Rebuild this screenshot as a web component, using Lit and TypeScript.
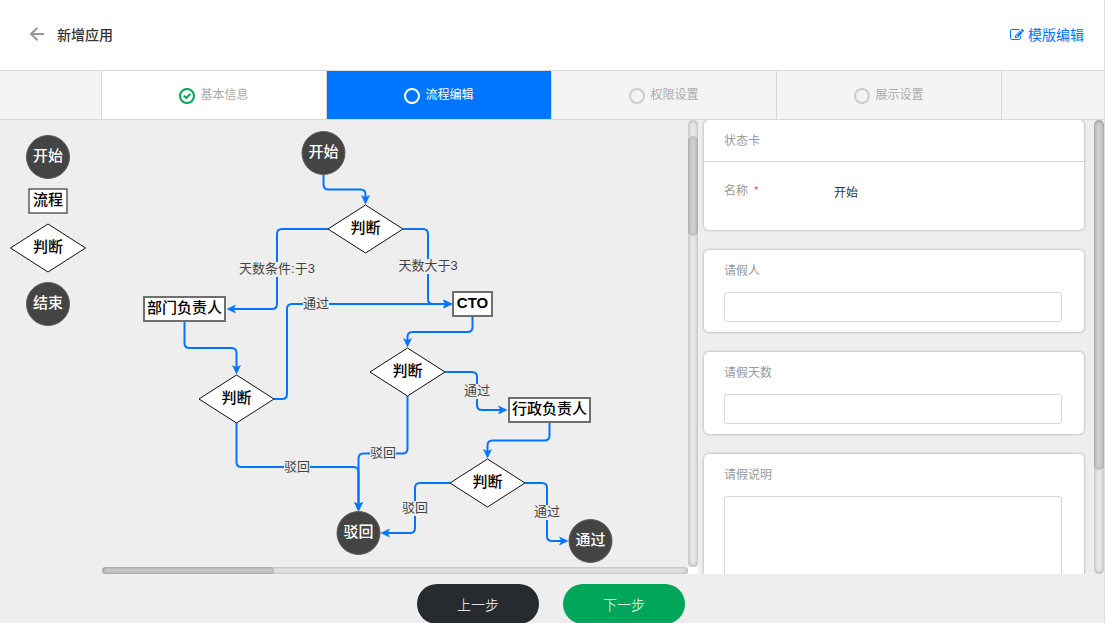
import { LitElement, html, svg, css, nothing } from "lit";
import { customElement, property } from "lit/decorators.js";

type Point = [number, number];

interface FlowNode {
  kind: "circle" | "box" | "diamond";
  x: number;
  y: number;
  w?: number;
  text: string;
}

interface FlowLink {
  points: Point[];
  label?: { x: number; y: number; w: number; text: string };
}

const NODES: FlowNode[] = [
  { kind: "circle", x: 221.5, y: 33, text: "开始" },
  { kind: "diamond", x: 263.5, y: 109, text: "判断" },
  { kind: "box", x: 82.5, y: 189, w: 81, text: "部门负责人" },
  { kind: "box", x: 370.5, y: 184, w: 39, text: "CTO" },
  { kind: "diamond", x: 134.5, y: 279, text: "判断" },
  { kind: "diamond", x: 305.5, y: 252, text: "判断" },
  { kind: "box", x: 447.5, y: 290, w: 81, text: "行政负责人" },
  { kind: "diamond", x: 385.5, y: 363, text: "判断" },
  { kind: "circle", x: 256.5, y: 413, text: "驳回" },
  { kind: "circle", x: 488.5, y: 421, text: "通过" },
];

const LINKS: FlowLink[] = [
  { points: [[221.5, 55], [221.5, 69.5], [263.5, 69.5], [263.5, 84]] },
  {
    points: [[226, 109], [175, 109], [175, 189], [125, 189]],
    label: { x: 175, y: 149, w: 74, text: "天数条件:于3" },
  },
  {
    points: [[301, 109], [326, 109], [326, 184], [350, 184]],
    label: { x: 326, y: 146, w: 60, text: "天数大于3" },
  },
  {
    points: [[172, 279], [185, 279], [185, 184], [350, 184]],
    label: { x: 214, y: 184, w: 26, text: "通过" },
  },
  { points: [[82.5, 202], [82.5, 228], [134.5, 228], [134.5, 254]] },
  {
    points: [[134.5, 303], [134.5, 347], [256.5, 347], [256.5, 391]],
    label: { x: 195, y: 347, w: 26, text: "驳回" },
  },
  {
    points: [[305.5, 276], [305.5, 333.5], [256.5, 333.5], [256.5, 391]],
    label: { x: 281, y: 333, w: 26, text: "驳回" },
  },
  { points: [[370.5, 197], [370.5, 212], [305.5, 212], [305.5, 227]] },
  {
    points: [[343, 252], [375, 252], [375, 290], [405, 290]],
    label: { x: 375, y: 271, w: 26, text: "通过" },
  },
  { points: [[447.5, 303], [447.5, 320.5], [385.5, 320.5], [385.5, 338]] },
  {
    points: [[348, 363], [313, 363], [313, 413], [279, 413]],
    label: { x: 313, y: 388, w: 26, text: "驳回" },
  },
  {
    points: [[423, 363], [445, 363], [445, 421], [466, 421]],
    label: { x: 445, y: 392, w: 26, text: "通过" },
  },
];

const PALETTE: FlowNode[] = [
  { kind: "circle", x: 48, y: 37, text: "开始" },
  { kind: "box", x: 48, y: 81, w: 38, text: "流程" },
  { kind: "diamond", x: 48, y: 128, text: "判断" },
  { kind: "circle", x: 48, y: 184, text: "结束" },
];

/** Moves `distance` from `from` in the direction of `to`. */
function toward(from: Point, to: Point, distance: number): Point {
  const length = Math.hypot(to[0] - from[0], to[1] - from[1]);
  return [
    from[0] + ((to[0] - from[0]) / length) * distance,
    from[1] + ((to[1] - from[1]) / length) * distance,
  ];
}

/** An orthogonal route with rounded corners that stops inside the arrowhead. */
function route(points: Point[]): string {
  const last = points.length - 1;
  let d = `M${points[0]}`;
  for (let i = 1; i < last; i++) {
    const before = toward(points[i], points[i - 1], 5);
    const after = toward(points[i], points[i + 1], 5);
    d += `L${before}Q${points[i]} ${after}`;
  }
  return d + `L${toward(points[last], points[last - 1], 5)}`;
}

function arrowHead(points: Point[]) {
  const tip = points[points.length - 1];
  const prev = points[points.length - 2];
  const angle = (Math.atan2(tip[1] - prev[1], tip[0] - prev[0]) * 180) / Math.PI;
  return svg`<path class="arrow" d="M0 0L-8.500 -4L-6.500 0L-8.500 4Z" transform="translate(${tip[0]} ${tip[1]}) rotate(${angle})"/>`;
}

function drawNode(n: FlowNode) {
  const shape =
    n.kind === "circle"
      ? svg`<circle class="disc" cx=${n.x} cy=${n.y} r="21.5"/>`
      : n.kind === "diamond"
        ? svg`<path class="diamond" d="M${n.x - 37.5} ${n.y}L${n.x} ${n.y - 24}L${n.x + 37.5} ${n.y}L${n.x} ${n.y + 24}Z"/>`
        : svg`<rect class="box" x=${n.x - n.w! / 2} y=${n.y - 12} width=${n.w!} height="24"/>`;
  const latin = /^[A-Z]+$/.test(n.text);
  return svg`<g class="node ${n.kind} ${latin ? "latin" : ""}">${shape}<text x=${n.x} y=${n.y + 4}>${n.text}</text></g>`;
}

function drawLink(l: FlowLink) {
  return svg`<path class="link" d=${route(l.points)}/>${arrowHead(l.points)}`;
}

function drawLabel(l: FlowLink) {
  const b = l.label;
  return b
    ? svg`<rect class="label-bg" x=${b.x - b.w / 2} y=${b.y - 7} width=${b.w} height="15"/>
        <text class="label" x=${b.x} y=${b.y + 4}>${b.text}</text>`
    : nothing;
}

const diagramStyles = css`
  svg {
    display: block;
    font-family: "Liberation Sans", "Noto Sans CJK SC", sans-serif;
  }
  text {
    text-anchor: middle;
  }
  .node text {
    font-size: 15px;
    font-weight: 500;
    fill: #000;
  }
  .node.latin text {
    font-weight: 700;
  }
  .node.circle text {
    fill: #fff;
  }
  .disc {
    fill: #444;
    stroke: #5c5c5c;
    stroke-width: 1;
  }
  .diamond path,
  path.diamond {
    fill: #fff;
    stroke: #111;
    stroke-width: 1;
  }
  rect.box {
    fill: #fff;
    stroke: #6f6f6f;
    stroke-width: 2;
  }
`;

@customElement("flow-palette")
export class FlowPalette extends LitElement {
  static styles = [
    diagramStyles,
    css`
      :host {
        display: block;
      }
      rect.box {
        stroke: #111;
        stroke-width: 1;
      }
    `,
  ];

  render() {
    return html`<svg width="96" height="220" viewBox="0 0 96 220" role="img" aria-label="节点">
      ${PALETTE.map(drawNode)}
    </svg>`;
  }
}

@customElement("flow-diagram")
export class FlowDiagram extends LitElement {
  static styles = [
    diagramStyles,
    css`
      :host {
        display: block;
      }
      .link {
        fill: none;
        stroke: #0075ff;
        stroke-width: 2;
      }
      .arrow {
        fill: #0075ff;
        stroke: #0075ff;
        stroke-width: 0.5;
      }
      .label-bg {
        fill: #eee;
      }
      .label {
        font-size: 13px;
        font-weight: 400;
        fill: #444;
      }
    `,
  ];

  render() {
    return html`<svg width="586" height="447" viewBox="0 0 586 447" role="img" aria-label="流程图">
      ${LINKS.map(drawLink)} ${LINKS.map(drawLabel)} ${NODES.map(drawNode)}
    </svg>`;
  }
}

@customElement("step-tab")
export class StepTab extends LitElement {
  @property() label = "";
  @property({ reflect: true }) state: "done" | "active" | "todo" = "todo";

  static styles = css`
    :host {
      display: grid;
      border-right: 1px solid #d8d8d8;
      color: #aaa;
      --ring: #ccc;
    }
    :host([state="done"]) {
      background: #fff;
      --ring: #00a65a;
    }
    :host([state="active"]) {
      background: #0075ff;
      color: #fff;
      --ring: #fff;
    }
    .tab {
      display: flex;
      align-items: center;
      justify-content: center;
      gap: 5px;
      padding: 0;
      border: 0;
      background: none;
      color: inherit;
      font: inherit;
      font-size: 12px;
      line-height: 18px;
      cursor: pointer;
    }
    .ring {
      margin-top: 2px;
      fill: none;
      stroke: var(--ring);
      stroke-width: 2;
    }
  `;

  render() {
    return html`<button class="tab" type="button">
      <svg class="ring" width="16" height="16" viewBox="0 0 16 16" aria-hidden="true">
        <circle cx="8" cy="8" r="7" />
        ${this.state === "done" ? svg`<path d="M4.8 7.6L7.3 10L11.3 6"/>` : nothing}
      </svg>
      <span>${this.label}</span>
    </button>`;
  }
}

@customElement("app-root")
export class AppRoot extends LitElement {
  static styles = css`
    :host {
      display: flex;
      flex-direction: column;
      box-sizing: border-box;
      height: 100vh;
      overflow: hidden;
      border-right: 1px solid #dcdce6;
      background: #eee;
      color: #333;
      font-family: "Liberation Sans", "Noto Sans CJK SC", sans-serif;
      font-size: 14px;
    }
    .header {
      display: flex;
      flex: none;
      align-items: center;
      justify-content: space-between;
      height: 70px;
      padding: 0 20px 0 29px;
      border-bottom: 1px solid #d8d8d8;
      background: #fff;
    }
    .heading {
      display: flex;
      align-items: center;
      gap: 12px;
    }
    .back {
      display: block;
      padding: 0;
      border: 0;
      background: none;
      cursor: pointer;
    }
    .back svg,
    .template svg {
      display: block;
    }
    .title {
      margin: 0;
      font-size: 14px;
      font-weight: 500;
      line-height: 20px;
    }
    .template {
      display: flex;
      align-items: center;
      gap: 4px;
      color: #0075ff;
      line-height: 20px;
      text-decoration: none;
    }
    .steps {
      display: grid;
      flex: none;
      grid-template-columns: 102px repeat(4, 1fr) 102px;
      height: 48px;
      border-bottom: 1px solid #d8d8d8;
      background: #f4f4f4;
    }
    .lead {
      border-right: 1px solid #d8d8d8;
    }
    .work {
      display: grid;
      flex: 1;
      grid-template-columns: 102px minmax(0, 596fr) minmax(0, 406fr);
      min-height: 0;
    }
    .canvas {
      display: grid;
      grid-template-columns: minmax(0, 1fr) 10px;
      grid-template-rows: minmax(0, 1fr) 7px;
      min-height: 0;
    }
    .view {
      overflow: auto;
      scrollbar-width: none;
    }
    .track {
      border-radius: 10px;
      background: #e8e8e8;
      box-shadow: inset 0 0 4px rgba(0, 0, 0, 0.3);
      overflow: hidden;
    }
    .thumb {
      border-radius: 10px;
      background: rgba(0, 0, 0, 0.1);
      box-shadow: inset 0 0 4px rgba(0, 0, 0, 0.1);
    }
    .canvas-y {
      height: 100px;
      margin-top: 16px;
    }
    .canvas-x {
      width: 172px;
      height: 100%;
      border-radius: 4px;
    }
    .track-x {
      border-radius: 4px;
    }
    .panel-y {
      height: 77%;
    }
    .corner {
      background: #fff;
    }
    .side {
      display: grid;
      grid-template-columns: minmax(0, 1fr) 10px;
      min-height: 0;
    }
    .panel {
      display: flex;
      flex-direction: column;
      gap: 20px;
      overflow: auto;
      scrollbar-width: none;
      padding: 0 10px 20px 6px;
    }
    .card {
      flex: none;
      border-radius: 5px;
      background: #fff;
      box-shadow: 0 0 3px rgba(0, 0, 0, 0.35);
      font-size: 12px;
    }
    .card-title {
      margin: 0;
      padding: 11px 20px 10px;
      border-bottom: 1px solid #d8d8d8;
      color: #999;
      font-size: 12px;
      font-weight: 400;
      line-height: 20px;
    }
    .row {
      display: flex;
      align-items: center;
      padding: 14px 20px 24px;
    }
    .row .name {
      flex: 0 0 110px;
    }
    .name {
      color: #999;
      line-height: 20px;
    }
    .required {
      margin-left: 3px;
      color: #f33;
      font-size: 10px;
      vertical-align: 1px;
      line-height: 1;
    }
    .plain {
      flex: 1;
      min-width: 0;
      height: 30px;
      padding: 0;
      border: 0;
      background: none;
      color: #333;
      font: inherit;
    }
    .field {
      display: flex;
      flex-direction: column;
      gap: 11px;
      padding: 11px 22px 10px 20px;
    }
    .box {
      box-sizing: border-box;
      width: 100%;
      height: 30px;
      padding: 4px 8px;
      border: 1px solid #d8d8d8;
      border-radius: 3px;
      background: #fff;
      color: #333;
      font: inherit;
    }
    .area {
      height: 120px;
      resize: none;
    }
    .footer {
      display: flex;
      flex: 0 0 49px;
      justify-content: center;
      gap: 24px;
      box-sizing: border-box;
      min-height: 0;
      padding: 10px 2px 0 0;
    }
    .btn {
      flex: none;
      width: 122px;
      height: 40px;
      padding: 0;
      border: 0;
      border-radius: 20px;
      color: #fff;
      font: inherit;
      font-weight: 300;
      cursor: pointer;
    }
    .prev {
      background: #272a2f;
    }
    .next {
      background: #00a65a;
    }
  `;

  render() {
    return html`
      <header class="header">
        <div class="heading">
          <button class="back" type="button" aria-label="返回">
            <svg width="16" height="16" viewBox="0 0 16 16" fill="none" stroke="#999" stroke-width="2" aria-hidden="true">
              <path d="M15 7H2.5M8.500 .7L2 7L8.500 13.300" />
            </svg>
          </button>
          <h1 class="title">新增应用</h1>
        </div>
        <a class="template" href="#template">
          <svg width="14" height="14" viewBox="0 0 1792 1792" fill="currentColor" aria-hidden="true">
            <path
              d="M888 1184l116-116-152-152-116 116v56h96v96h56zm440-720q-16-16-33 1l-350 350q-17 17-1 33t33-1l350-350q17-17 1-33zm80 594v190q0 119-84.500 203.500t-203.500 84.500h-832q-119 0-203.500-84.500t-84.500-203.500v-832q0-119 84.500-203.500t203.500-84.500h832q63 0 117 25 15 7 18 23 3 17-9 29l-49 49q-14 14-32 8-23-6-45-6h-832q-66 0-113 47t-47 113v832q0 66 47 113t113 47h832q66 0 113-47t47-113v-126q0-13 9-22l64-64q15-15 35-7t20 29zm-96-738l288 288-672 672h-288v-288zm444 132l-92 92-288-288 92-92q28-28 68-28t68 28l152 152q28 28 28 68t-28 68z"
            />
          </svg>
          <span>模版编辑</span>
        </a>
      </header>

      <nav class="steps" aria-label="步骤">
        <div class="lead"></div>
        <step-tab label="基本信息" state="done"></step-tab>
        <step-tab label="流程编辑" state="active"></step-tab>
        <step-tab label="权限设置" state="todo"></step-tab>
        <step-tab label="展示设置" state="todo"></step-tab>
      </nav>

      <main class="work">
        <flow-palette></flow-palette>
        <section class="canvas">
          <div class="view"><flow-diagram></flow-diagram></div>
          <div class="track"><div class="thumb canvas-y"></div></div>
          <div class="track track-x"><div class="thumb canvas-x"></div></div>
          <div class="corner"></div>
        </section>
        <section class="side">
          <form class="panel">
            <div class="card">
              <h2 class="card-title">状态卡</h2>
              <div class="row">
                <label class="name" for="name">名称 <span class="required">*</span></label>
                <input class="plain" id="name" type="text" .value=${"开始"} />
              </div>
            </div>
            <div class="card field">
              <label class="name" for="person">请假人</label>
              <input class="box" id="person" type="text" />
            </div>
            <div class="card field">
              <label class="name" for="days">请假天数</label>
              <input class="box" id="days" type="text" />
            </div>
            <div class="card field">
              <label class="name" for="note">请假说明</label>
              <textarea class="box area" id="note"></textarea>
            </div>
          </form>
          <div class="track"><div class="thumb panel-y"></div></div>
        </section>
      </main>

      <footer class="footer">
        <button class="btn prev" type="button">上一步</button>
        <button class="btn next" type="button">下一步</button>
      </footer>
    `;
  }
}
